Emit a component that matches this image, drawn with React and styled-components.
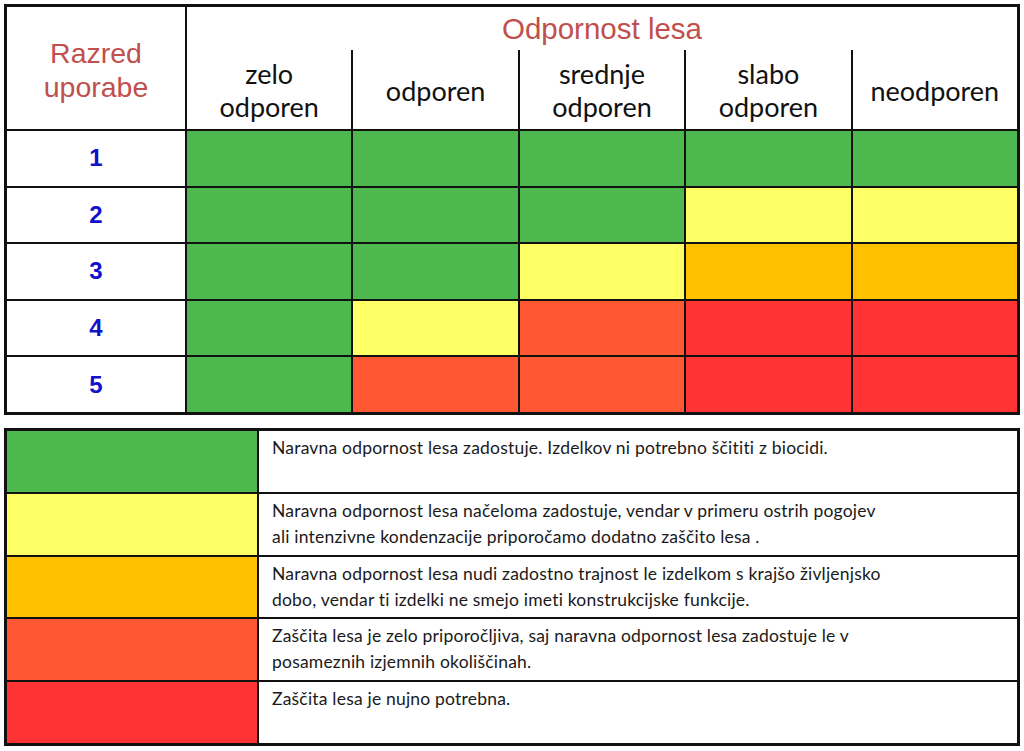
import React from 'react';
import styled, { createGlobalStyle } from 'styled-components';

const COLORS = {
  G: '#4db84e',
  Y: '#ffff66',
  O: '#ffc000',
  OR: '#ff5833',
  R: '#ff3333',
};

const columns = [
  ['zelo', 'odporen'],
  ['odporen'],
  ['srednje', 'odporen'],
  ['slabo', 'odporen'],
  ['neodporen'],
];

const matrix = [
  ['G', 'G', 'G', 'G', 'G'],
  ['G', 'G', 'G', 'Y', 'Y'],
  ['G', 'G', 'Y', 'O', 'O'],
  ['G', 'Y', 'OR', 'R', 'R'],
  ['G', 'OR', 'OR', 'R', 'R'],
];

const legend = [
  ['G', ['Naravna odpornost lesa zadostuje. Izdelkov ni potrebno ščititi z biocidi.']],
  ['Y', [
    'Naravna odpornost lesa načeloma zadostuje, vendar v primeru ostrih pogojev',
    'ali intenzivne kondenzacije priporočamo dodatno zaščito lesa .',
  ]],
  ['O', [
    'Naravna odpornost lesa nudi zadostno trajnost le izdelkom s krajšo življenjsko',
    'dobo, vendar ti izdelki ne smejo imeti konstrukcijske funkcije.',
  ]],
  ['OR', [
    'Zaščita lesa je zelo priporočljiva, saj naravna odpornost lesa zadostuje le v',
    'posameznih izjemnih okoliščinah.',
  ]],
  ['R', ['Zaščita lesa je nujno potrebna.']],
];

const GlobalStyle = createGlobalStyle`
  html, body {
    margin: 0;
    background: #fff;
  }
  body {
    padding: 4px;
    width: 1016px;
  }
`;

const Page = styled.div`
  display: flex;
  flex-direction: column;
  gap: 13px;
`;

const Matrix = styled.div`
  display: grid;
  grid-template-columns: 178px repeat(5, 1fr);
  grid-template-rows: 122px repeat(5, 1fr);
  height: 405px;
  gap: 2px;
  background: #111;
  border: 3px solid #111;
`;

const CornerCell = styled.div`
  background: #fff;
  display: flex;
  flex-direction: column;
  align-items: center;
  justify-content: center;
  font-family: "Liberation Sans", Arial, sans-serif;
  font-size: 28.5px;
  line-height: 34px;
  color: #c0504d;
  padding-top: 3px;
`;

const HeaderCell = styled.div`
  grid-column: 2 / span 5;
  background: #fff;
  display: flex;
  flex-direction: column;
`;

const Title = styled.div`
  height: 43px;
  display: flex;
  align-items: center;
  justify-content: center;
  font-family: "Liberation Sans", Arial, sans-serif;
  font-size: 29.5px;
  color: #c0504d;
`;

const SubHeader = styled.div`
  flex: 1;
  display: grid;
  grid-template-columns: repeat(5, 1fr);
  gap: 2px;
  background: #111;
`;

const SubCell = styled.div`
  background: #fff;
  display: flex;
  flex-direction: column;
  align-items: center;
  justify-content: center;
  padding-top: 1px;
  font-family: Lato, "Open Sans", sans-serif;
  font-size: 27px;
  line-height: 33px;
  color: #111;
`;

const RowLabel = styled.div`
  background: #fff;
  display: flex;
  align-items: center;
  justify-content: center;
  font-family: "Liberation Sans", Arial, sans-serif;
  font-weight: bold;
  font-size: 24px;
  color: #1111cc;
`;

const ColorCell = styled.div`
  background: ${(p) => COLORS[p.$tone]};
`;

const Legend = styled.div`
  display: grid;
  grid-template-columns: 250px 1fr;
  grid-auto-rows: 1fr;
  height: 312px;
  gap: 2px;
  background: #111;
  border: 3px solid #111;
`;

const LegendText = styled.div`
  background: #fff;
  padding: 4px 13px 0;
  font-family: Lato, "Open Sans", sans-serif;
  font-size: 17.5px;
  letter-spacing: 0.2px;
  line-height: 26px;
  color: #1a1a1a;
`;

export default function App() {
  return (
    <Page>
      <GlobalStyle />
      <Matrix>
        <CornerCell>
          <span>Razred</span>
          <span>uporabe</span>
        </CornerCell>
        <HeaderCell>
          <Title>Odpornost lesa</Title>
          <SubHeader>
            {columns.map((lines, i) => (
              <SubCell key={i}>
                {lines.map((l) => <span key={l}>{l}</span>)}
              </SubCell>
            ))}
          </SubHeader>
        </HeaderCell>
        {matrix.map((row, r) => (
          <React.Fragment key={r}>
            <RowLabel>{r + 1}</RowLabel>
            {row.map((tone, c) => <ColorCell key={c} $tone={tone} />)}
          </React.Fragment>
        ))}
      </Matrix>
      <Legend>
        {legend.map(([tone, lines]) => (
          <React.Fragment key={tone}>
            <ColorCell $tone={tone} />
            <LegendText>
              {lines.map((l) => <div key={l}>{l}</div>)}
            </LegendText>
          </React.Fragment>
        ))}
      </Legend>
    </Page>
  );
}
